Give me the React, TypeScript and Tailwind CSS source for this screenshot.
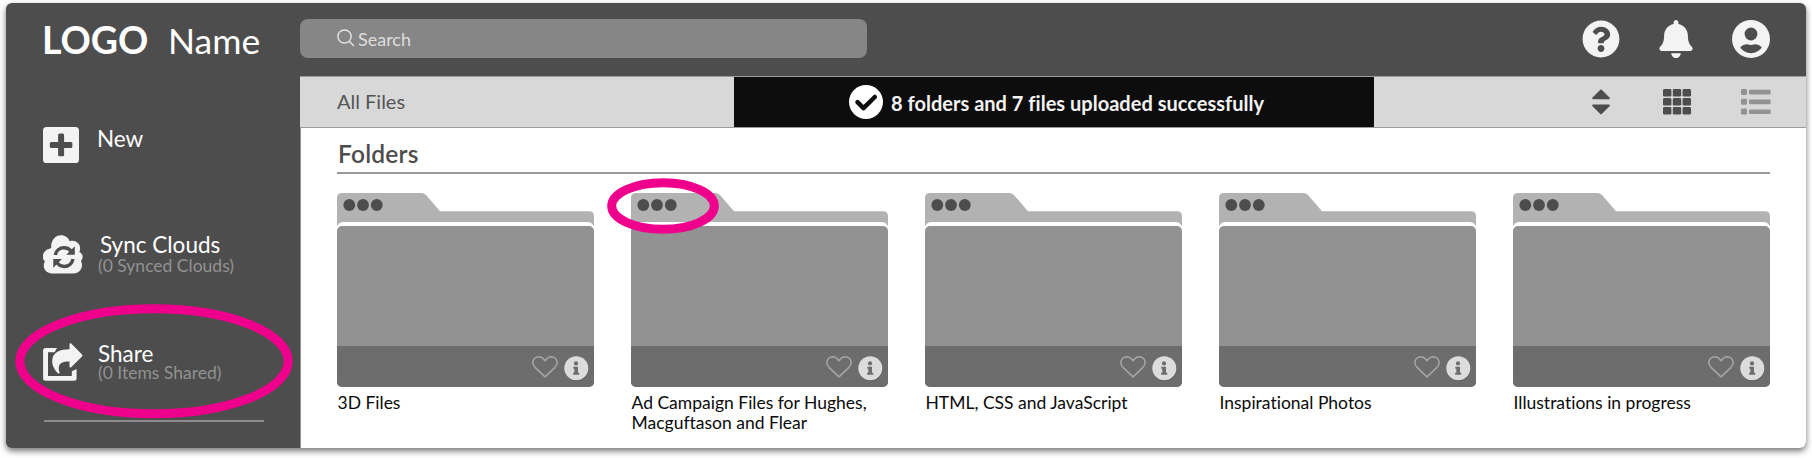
import React from "react";
import { FaQuestionCircle, FaBell } from "react-icons/fa";

const folders = [
  { name: "3D Files" },
  { name: "Ad Campaign Files for Hughes, Macguftason and Flear", marked: true },
  { name: "HTML, CSS and JavaScript" },
  { name: "Inspirational Photos" },
  { name: "Illustrations in progress" },
];

function AccountIcon() {
  return (
    <svg width="38" height="38" viewBox="0 0 38 38">
      <circle cx="19" cy="19" r="19" fill="#f3f3f3" />
      <circle cx="19" cy="14" r="6.4" fill="#4d4d4d" />
      <path d="M8.2 27.6C10 24.9 13.2 24.2 15.6 24.3C17.4 25.3 20.6 25.3 22.6 24.3C25 24.2 28 24.9 29.8 27.6C27.4 31 23.4 33.2 19 33.2S10.6 31 8.2 27.6Z" fill="#4d4d4d" />
    </svg>
  );
}

function SortIcon() {
  return (
    <svg width="18" height="26" viewBox="0 0 18 26" fill="#4d4d4d" stroke="#4d4d4d" strokeWidth="2" strokeLinejoin="round">
      <path d="M9 1.5L16.8 9.3H1.2Z" />
      <path d="M9 24.3L16.8 16.5H1.2Z" />
    </svg>
  );
}

function GridIcon() {
  return (
    <svg width="28" height="26" viewBox="0 0 28 26" fill="#4d4d4d">
      {[0, 9.8, 19.6].map((x) => [0, 9, 18].map((y) => <rect key={`${x}-${y}`} x={x} y={y} width="8.4" height="7.6" rx="1.4" />))}
    </svg>
  );
}

function ListIcon() {
  return (
    <svg width="30" height="26" viewBox="0 0 30 26" fill="#929292">
      {[0, 9.8, 19.6].map((y) => (
        <g key={y}>
          <rect x="0" y={y} width="6" height="6" rx="1.2" />
          <rect x="8" y={y + 0.8} width="21.6" height="4.6" rx="1.2" />
        </g>
      ))}
    </svg>
  );
}

function PlusIcon() {
  return (
    <svg width="36" height="36" viewBox="0 0 36 36">
      <rect width="36" height="36" rx="3.6" fill="#f3f3f3" />
      <path d="M16.6 6.6h3a1.5 1.5 0 0 1 1.5 1.5v6.8h6.8a1.5 1.5 0 0 1 1.5 1.5v3a1.5 1.5 0 0 1-1.5 1.5h-6.8v6.8a1.5 1.5 0 0 1-1.5 1.5h-3a1.5 1.5 0 0 1-1.5-1.5v-6.8H8.3a1.5 1.5 0 0 1-1.5-1.5v-3a1.5 1.5 0 0 1 1.5-1.5h6.8V8.1a1.5 1.5 0 0 1 1.5-1.5Z" fill="#4d4d4d" />
    </svg>
  );
}

function SyncIcon() {
  return (
    <svg width="40" height="39" viewBox="0 0 40 39">
      <path d="M8.3 13C7.4 6 12 .3 18 .3C22.3 .3 25.3 2.9 26.7 6.2C32.5 4.6 37.6 8.6 37.1 14.2C37 15.4 36.7 16.2 36.3 17C40.4 18.6 40.6 23.6 37.8 25.9C39.4 28 39.3 31.5 38 34C36.5 37 33.3 38.5 30 38.5H10C5 38.5 1.6 36 .9 32.2C.5 30 1 27.8 2 26.3C-.6 24.5-.9 20 1.2 17.3C2.7 15.2 5.6 13.6 8.3 13Z" fill="#f3f3f3" />
      <g fill="none" stroke="#4d4d4d" strokeWidth="3.5">
        <path d="M12.3 20C13 15.7 16.6 12.7 21 12.7C24 12.7 26.6 14.1 28.3 16.3" />
        <path d="M30 24C29.2 28.3 25.6 31.4 21.2 31.4C18.2 31.4 15.6 30 13.9 27.8" />
      </g>
      <path d="M31.8 11.2V19.8H23.2ZM10.3 32.7V24.1H18.9Z" fill="#4d4d4d" />
    </svg>
  );
}

function ShareIcon() {
  return (
    <svg width="40" height="38" viewBox="0 0 40 38" fill="#f3f3f3">
      <path d="M2.6 5H14L11.6 9.2H5V33H28.8V28.3L33.6 26V35.2A2.5 2.5 0 0 1 31.1 37.7H2.6A2.5 2.5 0 0 1 .1 35.2V7.5A2.5 2.5 0 0 1 2.6 5Z" />
      <path d="M26.5 1.1C26.5 .2 27.5-.1 28.2 .5L39 11.5C39.5 12.1 39.5 12.8 39 13.4L28.2 24.2C27.5 24.9 26.5 24.5 26.5 23.6V18.6C20 18.4 13.5 20 16.5 29.3C16.8 30.4 15.6 31 14.9 30.2C11.7 27 9.1 22.6 9.2 18C9.4 9 17.5 6.4 26.5 6.3Z" />
    </svg>
  );
}

function Folder({ name, marked }: { name: string; marked?: boolean }) {
  return (
    <article className="relative w-[257px]">
      <svg className="block" width="257" height="33" viewBox="0 0 257 33">
        <path d="M0 33V5Q0 0 5 0H84Q87 0 89 2L103 18.2H252Q257 18.2 257 23.2V33Z" fill="#b2b2b2" />
        <g fill="#4d4d4d">
          <circle cx="12.3" cy="12" r="5.9" />
          <circle cx="26" cy="12" r="5.9" />
          <circle cx="39.8" cy="12" r="5.9" />
        </g>
      </svg>
      <div className="relative -mt-1 rounded-t-[6px] bg-white pt-1">
        <div className="flex h-[161px] flex-col justify-end overflow-hidden rounded-[5px] bg-[#929292]">
          <div className="flex h-[41px] items-center justify-end gap-[6px] bg-[#6d6d6d] pr-[5px] pt-[3px]">
            <svg className="mb-[3px]" width="26" height="22" viewBox="0 0 26 22" fill="none" stroke="#a4a4a4" strokeWidth="1.6" strokeLinejoin="round">
              <path d="M13 20.8L3 11.3C.2 8.5 .3 4.5 2.5 2.5C5 .2 9 .5 11 2.5L13 4.6L15 2.5C17 .5 21 .2 23.5 2.5C25.7 4.5 25.8 8.5 23 11.3Z" />
            </svg>
            <svg width="25" height="25" viewBox="0 0 25 25">
              <circle cx="12.5" cy="12.9" r="12" fill="#5c5c5c" />
              <circle cx="12.3" cy="12.3" r="12" fill="#dcdcdc" />
              <g fill="#6d6d6d">
                <circle cx="12" cy="7.4" r="2.1" />
                <path d="M9.3 10.7H14V16.7H15.2V18.8H9.1V16.7H10.3V12.8H9.3Z" />
              </g>
            </svg>
          </div>
        </div>
      </div>
      <h3 className="mt-[6px] w-[254px] pl-[0.5px] text-[17.5px] leading-[19.5px] text-[#0a0a0a] [font-variant-ligatures:none]">{name}</h3>
      {marked && (
        <svg className="absolute -left-6 -top-[15px]" width="112" height="56" viewBox="0 0 112 56">
          <ellipse cx="56" cy="28" rx="51.3" ry="23.3" fill="none" stroke="#ef008c" strokeWidth="9" />
        </svg>
      )}
    </article>
  );
}

export default function App() {
  return (
    <div className="h-[458px] w-[1812px] overflow-hidden bg-white pl-[6px] pt-[3px] font-['Lato',sans-serif]">
      <div className="flex h-[445px] w-[1800px] flex-col overflow-hidden rounded-[6px] bg-[#4d4d4d] shadow-[0_3px_6px_rgba(0,0,0,0.55)]">
        <header className="flex h-[73px] shrink-0 items-center text-white">
          <div className="flex w-[294px] items-baseline pl-[36px] pt-[2px] leading-[44px]">
            <span className="w-[126px] text-[37.5px] font-bold">LOGO</span>
            <span className="text-[35.5px]">Name</span>
          </div>
          <div className="mb-[2px] flex h-[39px] w-[567px] items-center rounded-[8px] bg-[#868686] pl-[36px]">
            <svg className="mr-[3px] mb-[1px] ml-px" width="18" height="18" viewBox="0 0 18 18" fill="none" stroke="#e0e0e0" strokeWidth="1.5">
              <circle cx="7.5" cy="7.5" r="6.6" />
              <path d="M12.2 12.2L17 17" />
            </svg>
            <span className="pt-[2px] text-[18px] text-[#dedede]">Search</span>
          </div>
          <div className="mb-px ml-auto mr-[36px] flex items-center text-[#f3f3f3]">
            <FaQuestionCircle className="mb-px mr-[37px]" size={38} />
            <FaBell className="mr-[37px]" size={38} />
            <AccountIcon />
          </div>
        </header>

        <div className="flex flex-1">
          <nav className="w-[294px] shrink-0 pl-[37px] pt-[51px] text-[22.5px] leading-[20px] text-white">
            <div className="flex h-[108px] items-start">
              <PlusIcon />
              <span className="ml-[18px] mt-[2px]">New</span>
            </div>
            <div className="flex h-[108px] items-start">
              <SyncIcon />
              <div className="ml-[15px]">
                <div className="pl-[2px]">Sync Clouds</div>
                <div className="mt-px text-[17.5px] text-[#929292]">(0 Synced Clouds)</div>
              </div>
            </div>
            <div className="relative flex h-[77px] items-start">
              <ShareIcon />
              <div className="ml-[15px] mt-px">
                <div>Share</div>
                <div className="-mt-px text-[17.5px] text-[#929292]">(0 Items Shared)</div>
              </div>
              <svg className="absolute -left-[28px] -top-[39px]" width="278" height="115" viewBox="0 0 278 115">
                <ellipse cx="139" cy="57.3" rx="134.2" ry="52.5" fill="none" stroke="#ef008c" strokeWidth="9" />
              </svg>
            </div>
            <div className="h-[2px] w-[220px] translate-x-px bg-[#8c8c8c]" />
          </nav>

          <main className="flex-1 border-l border-[#929292] bg-white">
            <div className="-ml-px flex h-[52px] items-center border-y border-[#9b9b9b] bg-[#d8d8d8]">
              <span className="w-[434px] pb-[2px] pl-[37px] text-[20px] text-[#555]">All Files</span>
              <div className="flex h-[50px] w-[640px] items-center bg-[#0d0d0d] pl-[115px]">
                <svg width="34" height="34" viewBox="0 0 34 34">
                  <circle cx="17" cy="17" r="17" fill="#fff" />
                  <path d="M8.5 17.2L14.5 23.2L25.8 12" fill="none" stroke="#0d0d0d" strokeWidth="4.5" strokeLinecap="round" strokeLinejoin="round" />
                </svg>
                <span className="ml-[8px] pt-[2px] text-[20px] font-bold tracking-[0.02px] text-[#f3f3f3]">8 folders and 7 files uploaded successfully</span>
              </div>
              <div className="ml-auto mr-[35px] flex items-center">
                <div className="mr-[53px]"><SortIcon /></div>
                <div className="mr-[50px]"><GridIcon /></div>
                <ListIcon />
              </div>
            </div>
            <section className="pl-[36px] pr-[36px] pt-[12px]">
              <h2 className="h-[32px] pl-px text-[24.5px] font-semibold leading-[28px] tracking-[0.2px] text-[#4d4d4d]">Folders</h2>
              <div className="mb-[19px] h-[2px] bg-[#999]" />
              <div className="flex justify-between">
                {folders.map((f) => <Folder key={f.name} {...f} />)}
              </div>
            </section>
          </main>
        </div>
      </div>
    </div>
  );
}
